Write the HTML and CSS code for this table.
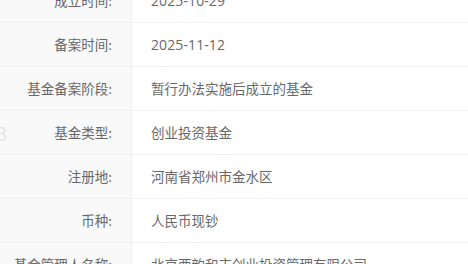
FILE: index.html
```html
<!DOCTYPE html>
<html lang="zh-CN">
<head>
    <meta charset="UTF-8" />
    <meta name="viewport" content="width=device-width, initial-scale=1.0"/>
    <title>基金信息</title>
    <link rel="stylesheet" href="styles.css">
</head>
<body>
    <div class="fund-info">
        <span class="watermark">3</span>
        <table class="info-table">
            <tr>
                <th>成立时间:</th>
                <td><span class="num">2025-10-29</span></td>
            </tr>
            <tr>
                <th>备案时间:</th>
                <td><span class="num">2025-11-12</span></td>
            </tr>
            <tr>
                <th>基金备案阶段:</th>
                <td>暂行办法实施后成立的基金</td>
            </tr>
            <tr>
                <th>基金类型:</th>
                <td>创业投资基金</td>
            </tr>
            <tr>
                <th>注册地:</th>
                <td>河南省郑州市金水区</td>
            </tr>
            <tr>
                <th>币种:</th>
                <td>人民币现钞</td>
            </tr>
            <tr>
                <th>基金管理人名称:</th>
                <td>北京西韵和丰创业投资管理有限公司</td>
            </tr>
        </table>
    </div>
</body>
</html>
```

FILE: styles.css
```css
body {
    margin: 0;
    background-color: #fff;
    font-family: "Noto Sans CJK SC", "Noto Sans", sans-serif;
    overflow: hidden;
}

.fund-info {
    position: relative;
    margin-top: -22px; /* list is scrolled part way down */
}

.info-table {
    width: 100%;
    border-collapse: collapse;
    font-size: 13.5px;
    color: #686868;
}

.info-table tr {
    height: 44px;
    border-bottom: 1px solid #f0f0f0;
}

.info-table th {
    width: 112px;
    padding: 0 19px 0 0;
    text-align: right;
    font-weight: normal;
    background-color: #f9f9f9;
    border-right: 1px solid #eee;
    white-space: nowrap;
}

.info-table td {
    padding: 0 0 0 19px;
    text-align: left;
    white-space: nowrap;
}

/* dates use a wider latin face */
.info-table .num {
    font-family: "Open Sans", "Noto Sans CJK SC", sans-serif;
    font-size: 14px;
    letter-spacing: 0.1px;
}

/* faint mark peeking in from the left edge */
.watermark {
    position: absolute;
    left: -3px;
    top: 142px;
    font-size: 18px;
    color: #e4e4e4;
}
```
